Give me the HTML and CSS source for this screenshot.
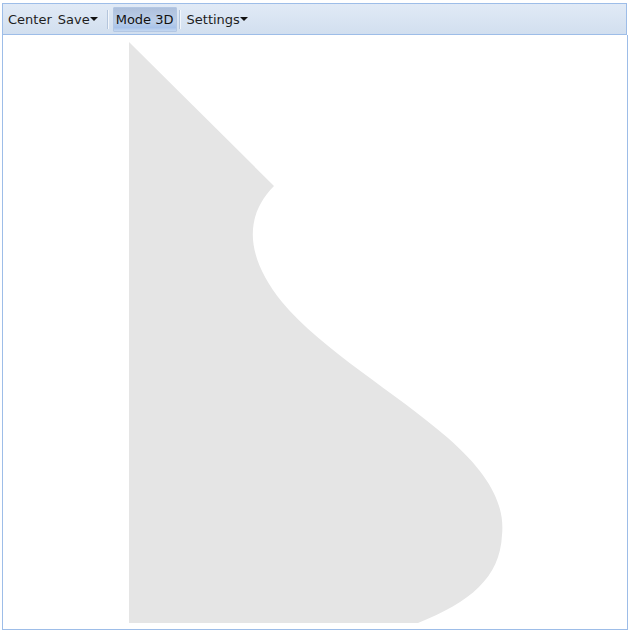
FILE: index.html
```html
<!DOCTYPE html>
<html>
<head>
<meta charset="utf-8">
<link rel="stylesheet" href="styles.css">
</head>
<body>
<div class="app">
  <div class="toolbar">
    <span class="btn">Center</span>
    <span class="btn menu">Save<span class="caret"></span></span>
    <span class="sep sep-first"></span>
    <span class="btn active">Mode 3D</span>
    <span class="sep sep-second"></span>
    <span class="btn menu">Settings<span class="caret"></span></span>
  </div>
  <div class="canvas">
    <svg class="shape" width="625" height="594" viewBox="0 0 625 594">
      <g transform="translate(-3,-35)">
        <path fill="#e5e5e5" d="M129,42 L274,186 C245,215 244,255 282,302 C322,350 395,392 448,438 C490,475 505,505 502,535 C500,578 470,602 418,623 L129,623 Z"/>
      </g>
    </svg>
  </div>
</div>
</body>
</html>
```

FILE: styles.css
```css
html, body {
  margin: 0;
  padding: 0;
  background: #ffffff;
}
body {
  font-family: "DejaVu Sans", sans-serif;
}
.app {
  margin: 3px 0 0 2px;
  width: 626px;
}
.toolbar {
  box-sizing: border-box;
  width: 625px;
  height: 32px;
  border: 1px solid #9dbde8;
  background: linear-gradient(#e1eaf6, #d2dfef);
  display: flex;
  align-items: center;
  padding-left: 2px;
  font-size: 13px;
  color: #1e1e1e;
}
.btn {
  display: flex;
  align-items: center;
  height: 25px;
  padding: 0 3px;
  box-sizing: border-box;
}
.caret {
  display: inline-block;
  width: 0;
  height: 0;
  margin-left: 0;
  border-left: 4px solid transparent;
  border-right: 4px solid transparent;
  border-top: 4px solid #111;
}
.sep {
  width: 1px;
  height: 19px;
  background: #b4c5dc;
  border-right: 1px solid #f2f6fb;
}
.sep-first {
  margin: 0 4px 0 6px;
}
.sep-second {
  margin: 0 3px 0 2px;
}
.active {
  padding: 0 2px;
  background: linear-gradient(#aec0dc 0%, #bccfe9 60%, #a8c3ea 85%, #c5d8f1 100%);
  border: 1px solid #b3c7e3;
  border-radius: 1px;
  color: #111;
}
.canvas {
  box-sizing: border-box;
  width: 626px;
  height: 595px;
  border: 1px solid #9dbde8;
  border-top: none;
  background: #fff;
  overflow: hidden;
}
.shape {
  display: block;
}
```
